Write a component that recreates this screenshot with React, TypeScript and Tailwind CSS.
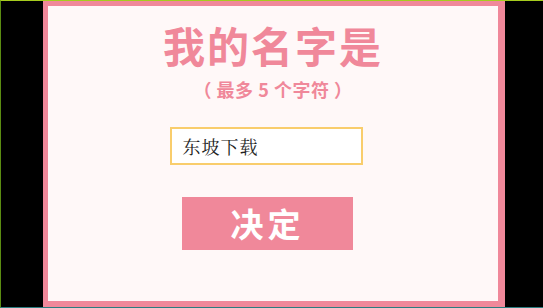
export default function App() {
  return (
    <div className="flex h-[308px] w-[543px] border-t border-b border-l border-t-[#a6cc1e] border-b-[#2b7d80] border-l-[#5b8c12] bg-black font-['Noto_Sans_CJK_SC',sans-serif]">
      <div className="ml-[42px] flex h-full w-[462px] flex-col items-center border-t-[5px] border-r-[7px] border-b-[6px] border-l-[5px] border-[#f0889a] bg-[#fff8f8]">
        <h1 className="mt-[18px] text-[42px] leading-[42px] font-bold tracking-[2px] text-[#f0889a]">
          我的名字是
        </h1>
        <p className="mt-[13px] text-[18px] leading-[20px] font-bold tracking-[0.5px] text-[#f0889a]">
          （ 最多 5 个字符 ）
        </p>
        <div className="mt-[28px] mr-[14px] flex h-[38px] w-[193px] items-center border-2 border-[#f9cd6c] bg-white px-[11px]">
          <span className="font-['Noto_Serif_CJK_SC','Noto_Sans_CJK_SC',serif] text-[18px] leading-[20px] tracking-[1px] text-[#222]">
            东坡下载
          </span>
        </div>
        <button className="mt-[32px] mr-[11px] flex h-[53px] w-[171px] items-center justify-center bg-[#f0889a] text-[33px] leading-none font-bold tracking-[4px] text-white">
          决定
        </button>
      </div>
    </div>
  );
}
